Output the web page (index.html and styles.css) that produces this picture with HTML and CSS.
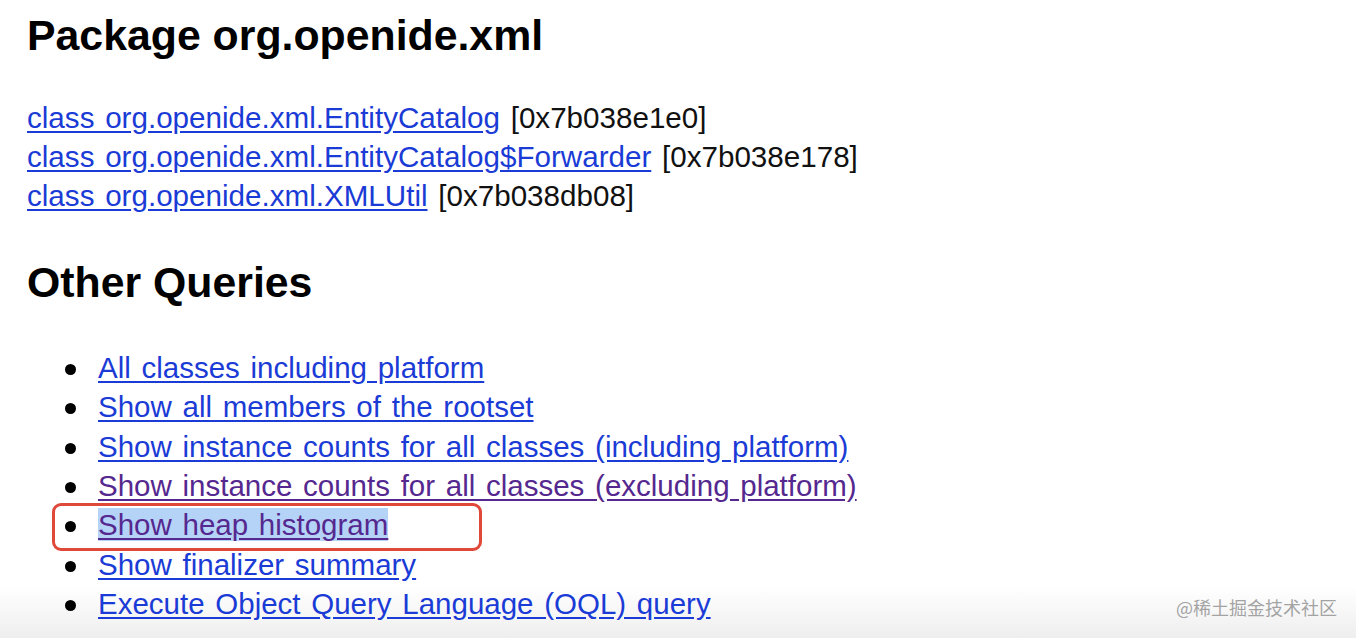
FILE: index.html
```html
<!DOCTYPE html>
<html lang="en">

<head>
    <meta charset="UTF-8">
    <meta name="viewport" content="width=device-width, initial-scale=1.0">
    <title>Package org.openide.xml</title>
    <link rel="stylesheet" href="styles.css">
</head>

<body>

    <div class="page">
        <h2 class="title">Package org.openide.xml</h2>

        <div class="classes">
            <a href="#" class="link">class org.openide.xml.EntityCatalog</a> [0x7b038e1e0]<br>
            <a href="#" class="link">class org.openide.xml.EntityCatalog$Forwarder</a> [0x7b038e178]<br>
            <a href="#" class="link">class org.openide.xml.XMLUtil</a> [0x7b038db08]
        </div>

        <h2 class="title queries-title">Other Queries</h2>

        <ul class="queries">
            <li><a href="#" class="link">All classes including platform</a></li>
            <li><a href="#" class="link">Show all members of the rootset</a></li>
            <li><a href="#" class="link">Show instance counts for all classes (including platform)</a></li>
            <li><a href="#" class="link visited">Show instance counts for all classes (excluding platform)</a></li>
            <li class="marked">
                <a href="#" class="link visited selected">Show heap histogram</a>
                <span class="mark-box"></span>
            </li>
            <li><a href="#" class="link">Show finalizer summary</a></li>
            <li><a href="#" class="link">Execute Object Query Language (OQL) query</a></li>
        </ul>
    </div>

    <div class="watermark">@稀土掘金技术社区</div>

</body>

</html>
```

FILE: styles.css
```css
html,
body {
    margin: 0;
    padding: 0;
}

body {
    font-family: 'Liberation Sans', Arial, sans-serif;
    color: #111;
    background: linear-gradient(to bottom, #ffffff 0%, #ffffff 92%, #eeeeee 100%);
    min-height: 100vh;
    overflow: hidden;
}

.page {
    padding: 0 0 0 27px;
}

.title {
    font-size: 42.8px;
    font-weight: bold;
    line-height: 50px;
    margin: 10px 0 0 0;
    color: #000;
}

.classes {
    font-size: 29.6px;
    line-height: 39px;
    margin-top: 38px;
    word-spacing: 2.5px;
}

.queries-title {
    margin-top: 42px;
}

.queries {
    font-size: 29.5px;
    line-height: 39.33px;
    margin: 41px 0 0 0;
    padding-left: 71px;
    list-style: none;
    word-spacing: 2.5px;
}

.queries li {
    position: relative;
}

.queries li::before {
    content: '';
    position: absolute;
    left: -33px;
    top: 16px;
    width: 11px;
    height: 11px;
    border-radius: 50%;
    background: #000;
}

.link {
    color: #1b3bd6;
    text-decoration: underline;
    text-underline-offset: 3px;
}

.link.visited {
    color: #55288f;
}

.selected {
    background: #b5d3f7;
}

.mark-box {
    position: absolute;
    left: -46px;
    top: -2px;
    width: 430px;
    height: 48px;
    box-sizing: border-box;
    border: 3px solid #e0483a;
    border-radius: 9px;
}

.watermark {
    position: absolute;
    right: 19px;
    bottom: 19px;
    font-family: 'Noto Sans CJK SC', sans-serif;
    font-size: 18px;
    line-height: 24px;
    color: #a3a3a3;
    text-shadow: 0 0 1px rgba(255, 255, 255, 0.8);
}
```
